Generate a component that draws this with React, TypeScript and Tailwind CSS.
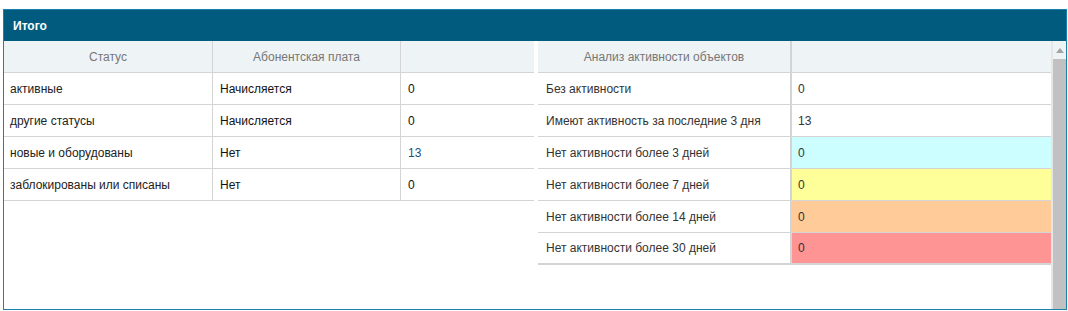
const statusRows = [
  { status: "активные", fee: "Начисляется", count: "0" },
  { status: "другие статусы", fee: "Начисляется", count: "0" },
  { status: "новые и оборудованы", fee: "Нет", count: "13", link: true },
  { status: "заблокированы или списаны", fee: "Нет", count: "0" },
];

const activityRows = [
  { label: "Без активности", value: "0", bg: "bg-white" },
  { label: "Имеют активность за последние 3 дня", value: "13", bg: "bg-white" },
  { label: "Нет активности более 3 дней", value: "0", bg: "bg-[#ccfeff]" },
  { label: "Нет активности более 7 дней", value: "0", bg: "bg-[#ffff99]" },
  { label: "Нет активности более 14 дней", value: "0", bg: "bg-[#ffcc99]" },
  { label: "Нет активности более 30 дней", value: "0", bg: "bg-[#ff9494]" },
];

export default function App() {
  return (
    <div className="h-[311px] w-[1068px] bg-white pl-[3px] pt-[9px] font-['Liberation_Sans',Arial,sans-serif] text-[12px] text-[#333]">
      <div className="flex h-[301px] w-[1064px] flex-col border border-[#1a83ad]">
        {/* Title */}
        <div className="flex h-[31px] shrink-0 items-center bg-[#005b7e] pl-[9px] font-bold text-white">
          Итого
        </div>

        <div className="flex min-h-0 flex-1">
          {/* Left table: statuses */}
          <div className="w-[530px] shrink-0">
            <div className="grid h-[32px] grid-cols-[209px_188px_133px] border-b border-[#d4d4d4] bg-[#eef3f5] text-[#777]">
              <div className="flex items-center justify-center border-r border-[#d4d4d4]">Статус</div>
              <div className="flex items-center justify-center border-r border-[#d4d4d4]">Абонентская плата</div>
              <div />
            </div>
            {statusRows.map((r) => (
              <div
                key={r.status}
                className="grid h-[32px] grid-cols-[209px_188px_133px] border-b border-[#d4d4d4]"
              >
                <div className="flex items-center border-r border-[#d4d4d4] pl-[6px] text-[#222]">{r.status}</div>
                <div className="flex items-center border-r border-[#d4d4d4] pl-[7px] text-[#111]">{r.fee}</div>
                <div className={`flex items-center pl-[7px] ${r.link ? "text-[#1d4f7c]" : "text-[#111]"}`}>
                  {r.count}
                </div>
              </div>
            ))}
          </div>

          <div className="w-[4px] shrink-0" />

          {/* Right table: activity */}
          <div className="w-[513px] shrink-0">
            <div className="grid h-[32px] grid-cols-[252px_261px] border-b border-[#d4d4d4] bg-[#eef3f5] text-[#777]">
              <div className="flex items-center justify-center">Анализ активности объектов</div>
              <div className="border-l-2 border-[#d4d4d4]" />
            </div>
            {activityRows.map((r, i) => (
              <div
                key={r.label}
                className={`grid h-[32px] grid-cols-[252px_261px] border-[#d4d4d4] ${
                  i === activityRows.length - 1 ? "border-b-2" : "border-b"
                }`}
              >
                <div className="flex items-center bg-white pl-[8px] text-[#333]">{r.label}</div>
                <div className={`flex items-center border-l-2 border-[#d4d4d4] pl-[6px] text-[#333] ${r.bg}`}>
                  {r.value}
                </div>
              </div>
            ))}
          </div>

          {/* Scrollbar */}
          <div className="flex w-[15px] shrink-0 flex-col">
            <div className="flex h-[18px] items-center justify-center border-l-2 border-[#e6e6e6] bg-[#eef3f5]">
              <svg width="8" height="5" viewBox="0 0 8 5">
                <path d="M0 5 L4 0 L8 5 Z" fill="#a3a3a3" />
              </svg>
            </div>
            <div className="flex-1 border-l-2 border-[#e6e6e6] bg-[#c1c1c1]" />
          </div>
        </div>
      </div>
    </div>
  );
}
